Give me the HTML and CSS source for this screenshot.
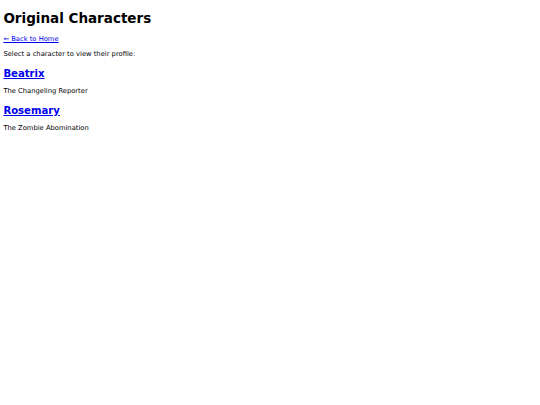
FILE: index.html
```html
<!DOCTYPE html>
<html lang="en">
<head>
<meta charset="utf-8">
<title>Original Characters</title>
<link rel="stylesheet" href="styles.css">
</head>
<body class="page">
<h1 class="title">Original Characters</h1>
<p class="text"><a class="link" href="#">← Back to Home</a></p>
<p class="text">Select a character to view their profile:</p>
<h2 class="name"><a class="link" href="#">Beatrix</a></h2>
<p class="text">The Changeling Reporter</p>
<h2 class="name"><a class="link" href="#">Rosemary</a></h2>
<p class="text">The Zombie Abomination</p>
</body>
</html>
```
FILE: styles.css
```css
.page {
  margin: 3.4px;
  font-family: "DejaVu Sans", sans-serif;
  font-size: 6.75px;
  color: #000;
  background: #fff;
}
.title {
  font-size: 13.5px;
  margin: 7px 0 9px;
}
.name {
  font-size: 10.1px;
  margin: 9.5px 0 8.5px;
}
.text {
  margin: 6.75px 0;
}
.link {
  color: #0000ee;
}
```
